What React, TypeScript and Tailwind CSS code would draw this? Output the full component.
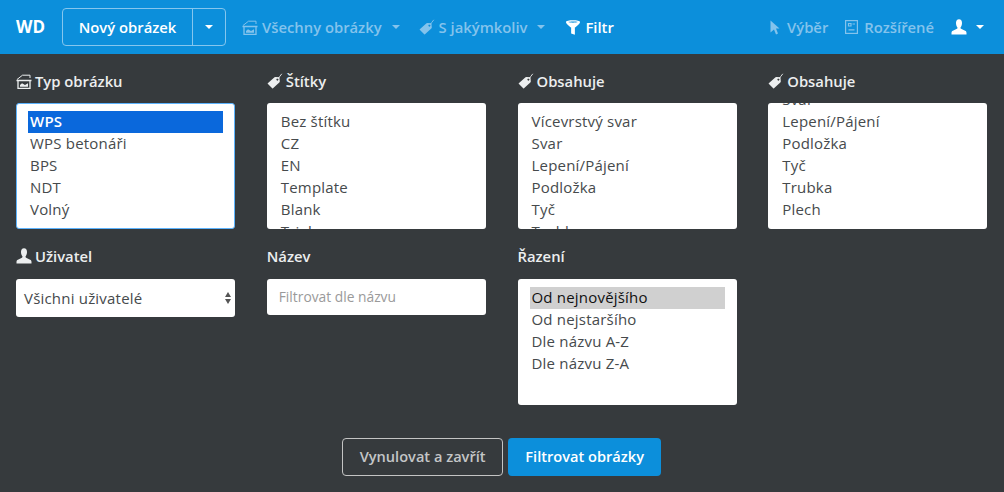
import React from "react";

const font = "font-['Open_Sans','Liberation_Sans',sans-serif]";

const TypeIcon = ({ className }: { className?: string }) => (
  <svg viewBox="0 0 16 15" className={className} fill="none" stroke="currentColor">
    <path d="M.5 6.500h15M2 6.500v8h12v-8" strokeWidth="1.300" />
    <path d="M1 5.500 L6.500 1.200 L14 1.200 L14 4" strokeWidth="1" />
    <path d="M4 12.800 V11 L6 9.300 L9 11 L12 9.300 V12.800Z" fill="currentColor" stroke="none" />
  </svg>
);

const TagIcon = ({ className }: { className?: string }) => (
  <svg viewBox="0 0 16 16" className={className} fill="currentColor">
    <path d="M0.5 10.500 L7.500 4.200 Q8 3.800 8.800 3.900 L12.400 4.300 L12.800 8.300 Q12.800 9 12.300 9.500 L6 15.300 Q5.600 15.600 5.200 15.200 Z M10.400 5.400 a1 1 0 1 0 0.01 0Z" fillRule="evenodd" />
    <path d="M10.800 6 Q12.600 3.600 14.800 .8" fill="none" stroke="currentColor" strokeWidth="0.9" />
  </svg>
);

const UserIcon = ({ className }: { className?: string }) => (
  <svg viewBox="0 0 16 16" className={className} fill="currentColor">
    <path d="M8 .3c2 0 3 1.500 3 3.600 0 1.700-.6 3.300-1.300 4.300-.4.600-.2 1.300.4 1.600l4 2c.9.400 1.400 1.100 1.400 2.200v1.600H.5V14c0-1.100.5-1.800 1.400-2.200l4-2c.6-.3.8-1 .4-1.600C5.600 7.200 5 5.600 5 3.900 5 1.800 6 .3 8 .3z" />
  </svg>
);

const FilterIcon = ({ className }: { className?: string }) => (
  <svg viewBox="0 0 16 16" className={className} fill="currentColor">
    <path fillRule="evenodd" d="M.5 2C.5 .9 4 .3 8 .3s7.500 .6 7.500 1.700c0 1.800-3.800 4.800-5.500 6v7.700L6 14.500V8C4.300 6.800 .5 3.800 .5 2zM3 2.200C4.200 3 11.800 3 13 2.200 11.800 1.400 4.200 1.400 3 2.200z" />
  </svg>
);

const CursorIcon = ({ className }: { className?: string }) => (
  <svg viewBox="0 0 10 15" className={className} fill="currentColor">
    <path d="M.5 .5 L9.500 8.500 H6 L8 13.500 L6 14.500 L4 9.500 L.5 12.500Z" />
  </svg>
);

const BoxIcon = ({ className }: { className?: string }) => (
  <svg viewBox="0 0 13 14" className={className} fill="none" stroke="currentColor" strokeWidth="1.2">
    <rect x=".6" y=".6" width="11.800" height="12.800" />
    <path d="M3.500 3.500h2.500v2.500H3.500zM7.500 4h2.500M3.500 9.800h6" />
  </svg>
);

const Caret = ({ className }: { className?: string }) => (
  <span className={`inline-block w-0 h-0 border-x-[4px] border-x-transparent border-t-[4px] border-t-current ${className ?? ""}`} />
);

const NavItem = ({ icon, label, caret, strong, className }: { icon: React.ReactNode; label: string; caret?: boolean; strong?: boolean; className?: string }) => (
  <div className={`flex items-center gap-[4px] text-[14.8px] font-semibold ${strong ? "text-white" : "text-[#84c3ec]"} ${className ?? ""}`}>
    {icon}
    <span>{label}</span>
    {caret && <Caret className="ml-[6px]" />}
  </div>
);

const Label = ({ icon, children, low }: { icon?: React.ReactNode; children: React.ReactNode; low?: boolean }) => (
  <div className={`flex items-center gap-[3px] h-[18px] text-[14.8px] font-semibold text-[#eceeef] ${low ? "mb-[14px]" : "mb-[13px]"}`}>
    {icon}
    <span>{children}</span>
  </div>
);

const ListBox = ({ items, offset, active, selected, focus }: { items: string[]; offset?: string; active?: string; selected?: string; focus?: boolean }) => (
  <div className={`h-[126px] bg-white rounded-[3px] overflow-hidden text-[15px] tracking-[0.2px] leading-[20px] text-[#464a4c] ${focus ? "border border-[#5cb3fd] px-[11px]" : "px-[12px]"}`}>
    <div className={offset ?? "pt-[8px]"}>
      {items.map((item) => (
        <div
          key={item}
          className={`h-[22px] pl-[2px] ${active === item ? "bg-[#0a68dc] text-white font-semibold" : ""} ${selected === item ? "bg-[#d0d0d0] text-[#111111]" : ""}`}
        >
          {item}
        </div>
      ))}
    </div>
  </div>
);

export default function App() {
  return (
    <div className={`${font} w-[1004px] h-[492px] bg-[#363a3d] overflow-hidden`}>
      <nav className="h-[54px] bg-[#0c8fdb] flex items-center pl-[16px] pr-[20px]">
        <span className="text-white font-bold text-[17px] mr-[17px]">WD</span>
        <div className="flex h-[38px] border border-[#85c6ee] rounded-[4px] text-white mr-[16px]">
          <div className="w-[130px] flex items-center justify-center text-[14.8px] font-semibold border-r border-[#85c6ee]">Nový obrázek</div>
          <div className="w-[32px] flex items-center justify-center"><Caret /></div>
        </div>
        <div className="flex items-center gap-[19px]">
          <NavItem icon={<TypeIcon className="w-[16px] h-[15px]" />} label="Všechny obrázky" caret />
          <NavItem icon={<TagIcon className="w-[16px] h-[16px]" />} label="S jakýmkoliv" caret />
          <NavItem icon={<FilterIcon className="w-[16px] h-[15px]" />} label="Filtr" strong className="ml-[1px]" />
        </div>
        <div className="ml-auto flex items-center gap-[17px]">
          <NavItem icon={<CursorIcon className="w-[10px] h-[15px] mr-[3px]" />} label="Výběr" />
          <NavItem icon={<BoxIcon className="w-[13px] h-[14px] mr-[2px]" />} label="Rozšířené" />
          <div className="flex items-center gap-[9px] text-white">
            <UserIcon className="w-[16px] h-[16px]" />
            <Caret />
          </div>
        </div>
      </nav>

      <div className="pl-[16px] pr-[16.75px] pt-[18px]">
        <div className="grid grid-cols-4 gap-x-[31.75px] gap-y-[18px]">
          <div>
            <Label icon={<TypeIcon className="w-[16px] h-[15px]" />}>Typ obrázku</Label>
            <ListBox focus offset="pt-[7px]" items={["WPS", "WPS betonáři", "BPS", "NDT", "Volný"]} active="WPS" />
          </div>
          <div>
            <Label icon={<TagIcon className="w-[16px] h-[16px]" />}>Štítky</Label>
            <ListBox items={["Bez štítku", "CZ", "EN", "Template", "Blank", "Trial"]} />
          </div>
          <div>
            <Label icon={<TagIcon className="w-[16px] h-[16px]" />}>Obsahuje</Label>
            <ListBox items={["Vícevrstvý svar", "Svar", "Lepení/Pájení", "Podložka", "Tyč", "Trubka"]} />
          </div>
          <div>
            <Label icon={<TagIcon className="w-[16px] h-[16px]" />}>Obsahuje</Label>
            <ListBox offset="-mt-[14px]" items={["Svar", "Lepení/Pájení", "Podložka", "Tyč", "Trubka", "Plech"]} />
          </div>
          <div>
            <Label low icon={<UserIcon className="w-[16px] h-[16px]" />}>Uživatel</Label>
            <div className="h-[38px] bg-white rounded-[3px] flex items-center justify-between pl-[8px] pr-[4px] text-[15px] tracking-[0.2px] text-[#464a4c]">
              <span>Všichni uživatelé</span>
              <span className="flex flex-col gap-[2px]">
                <span className="w-0 h-0 border-x-[3.5px] border-x-transparent border-b-[5px] border-b-[#555555]" />
                <span className="w-0 h-0 border-x-[3.5px] border-x-transparent border-t-[5px] border-t-[#555555]" />
              </span>
            </div>
          </div>
          <div>
            <Label low>Název</Label>
            <div className="h-[36px] bg-white rounded-[3px] flex items-center px-[12px] text-[13.8px] text-[#9a9a9a]">Filtrovat dle názvu</div>
          </div>
          <div>
            <Label low>Řazení</Label>
            <ListBox items={["Od nejnovějšího", "Od nejstaršího", "Dle názvu A-Z", "Dle názvu Z-A"]} selected="Od nejnovějšího" />
          </div>
        </div>
        <div className="flex justify-center gap-[5px] mt-[33px]">
          <div className="h-[38px] w-[161px] flex items-center justify-center border border-[#c4c4c4] rounded-[4px] text-[14.6px] font-semibold text-[#c4c6c7]">Vynulovat a zavřít</div>
          <div className="h-[38px] w-[153px] flex items-center justify-center bg-[#0c8fdb] rounded-[4px] text-[14.6px] font-semibold text-white">Filtrovat obrázky</div>
        </div>
      </div>
    </div>
  );
}
